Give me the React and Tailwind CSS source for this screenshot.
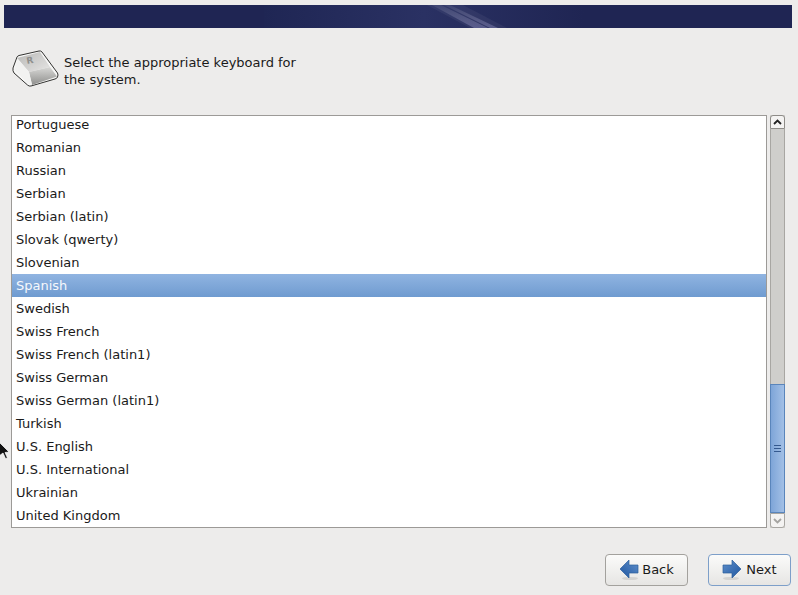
const languages = [
  "Portuguese",
  "Romanian",
  "Russian",
  "Serbian",
  "Serbian (latin)",
  "Slovak (qwerty)",
  "Slovenian",
  "Spanish",
  "Swedish",
  "Swiss French",
  "Swiss French (latin1)",
  "Swiss German",
  "Swiss German (latin1)",
  "Turkish",
  "U.S. English",
  "U.S. International",
  "Ukrainian",
  "United Kingdom",
];

const KeyIcon = () => (
  <svg width="48" height="38" viewBox="0 0 48 38" className="shrink-0">
    <defs>
      <linearGradient id="keyFront" x1="0" y1="0" x2="0" y2="1">
        <stop offset="0" stopColor="#d8d8d6" />
        <stop offset="1" stopColor="#8f8f8d" />
      </linearGradient>
      <linearGradient id="keyTop" x1="0" y1="0" x2="1" y2="1">
        <stop offset="0" stopColor="#b9b9b7" />
        <stop offset="1" stopColor="#e6e5e4" />
      </linearGradient>
    </defs>
    <path d="M1 19 L5 8 Q5.5 7 7 6.5 L27 2 Q29 1.6 30 3 L45.5 24 Q46.5 26 45.5 28 Q45 29.5 43 30 L19 37 Q17 37.5 15.5 36 L2 24 Q0.5 22 1 19 Z" fill="#f7f7f6" stroke="#333331" strokeWidth="1" />
    <path d="M5 9 L28 3 L38 18 L17 23 Z" fill="url(#keyTop)" />
    <path d="M17 23 L38 18 L45 27.5 L20 36 Z" fill="url(#keyFront)" />
    <path d="M2.5 21 L5.5 9.5 L17 23 L20 35.5 L16 34.5 Z" fill="#f2f2f1" />
    <text x="15" y="15" fontSize="9" fontWeight="700" fill="#8f8f8d" fontFamily="DejaVu Sans, sans-serif" transform="rotate(-10 15 15)">R</text>
  </svg>
);

const ArrowIcon = ({ flip }) => (
  <svg width="20" height="22" viewBox="0 0 20 22" className={flip ? "shrink-0 -scale-x-100" : "shrink-0"}>
    <defs>
      <linearGradient id={flip ? "arrowBack" : "arrowNext"} x1="0" y1="0" x2="1" y2="1">
        <stop offset="0" stopColor="#5f8fcb" />
        <stop offset="1" stopColor="#1f569f" />
      </linearGradient>
    </defs>
    <ellipse cx="9" cy="19.5" rx="8" ry="1.6" fill="#d4d3d1" />
    <path
      d="M1 6 H10 V1 L19 10 L10 19 V14 H1 Z"
      fill={flip ? "url(#arrowBack)" : "url(#arrowNext)"}
      stroke="#2d5f9c"
      strokeWidth="0.7"
      strokeLinejoin="round"
    />
  </svg>
);

const Cursor = () => (
  <svg width="10" height="17" viewBox="0 0 10 17" className="absolute left-0 top-[442px]">
    <path d="M-1 0 L9 10 L5 10.5 L7.5 16 L5.5 16.5 L3 11 L-1 14 Z" fill="#111111" stroke="#ffffff" strokeWidth="0.7" />
  </svg>
);

export default function App() {
  return (
    <div className="relative flex h-[595px] w-[798px] flex-col overflow-hidden bg-[#edeceb] font-['DejaVu_Sans',sans-serif] text-[13px] text-[#1a1a1a]">
      <div className="relative mx-1 mt-[5px] h-[23px] w-[788px] shrink-0 overflow-hidden bg-[#1f2553]">
        <svg width="788" height="23" viewBox="0 0 788 23" className="absolute left-0 top-0">
          <defs>
            <linearGradient id="headerFade" x1="0" y1="0" x2="1" y2="0">
              <stop offset="0" stopColor="#1f2654" />
              <stop offset="0.5" stopColor="#2a3163" />
              <stop offset="1" stopColor="#1f2553" />
            </linearGradient>
            <linearGradient id="streakFade" x1="0" y1="0" x2="0" y2="1">
              <stop offset="0" stopColor="#ffffff" stopOpacity="0.06" />
              <stop offset="1" stopColor="#b8b4e8" stopOpacity="0.3" />
            </linearGradient>
          </defs>
          <rect x="260" width="320" height="23" fill="url(#headerFade)" />
          <polygon points="423,0 459,0 503,23 466,23" fill="#ffffff" fillOpacity="0.05" />
          <polygon points="428,0 437,0 484,23 470,23" fill="url(#streakFade)" />
          <polygon points="440,0 446,0 494,23 486,23" fill="url(#streakFade)" />
        </svg>
      </div>

      <div className="mt-[21px] flex h-[50px] shrink-0 items-start pl-3">
        <KeyIcon />
        <p className="ml-1 mt-[5px] w-[240px] leading-[17px]">
          Select the appropriate keyboard for the system.
        </p>
      </div>

      <div className="mt-[16px] flex h-[413px] shrink-0 pl-[11px]">
        <div className="h-full w-[756px] overflow-hidden border border-[#9c9a97] bg-white">
          <div className="-mt-[3px]">
            {languages.map((name) => (
              <div
                key={name}
                className={
                  name === "Spanish"
                    ? "flex h-[23px] items-center bg-gradient-to-b from-[#90b4e1] to-[#6f9bd0] pl-1 text-[#f6f8fc]"
                    : "flex h-[23px] items-center pl-1"
                }
              >
                {name}
              </div>
            ))}
          </div>
        </div>

        <div className="ml-[3px] flex h-full w-[15px] flex-col bg-[#cfcecb]">
          <div className="flex h-[14px] shrink-0 items-center justify-center rounded-t-[3px] border border-[#8e8c88] bg-[#f4f3f2]">
            <svg width="9" height="6" viewBox="0 0 9 6">
              <path d="M1 5 L4.5 1.5 L8 5" fill="none" stroke="#222222" strokeWidth="1.8" />
            </svg>
          </div>
          <div className="flex-1 border-x border-[#a8a6a2]" />
          <div className="flex h-[129px] shrink-0 flex-col items-center justify-center gap-[2px] border border-[#5a85bb] bg-gradient-to-r from-[#7ea5d8] to-[#a3c0e6]">
            <span className="h-px w-[7px] bg-[#34598f]" />
            <span className="h-px w-[7px] bg-[#34598f]" />
            <span className="h-px w-[7px] bg-[#34598f]" />
          </div>
          <div className="flex h-[15px] shrink-0 items-center justify-center rounded-b-[3px] border border-[#a8a6a2] bg-[#f4f3f2]">
            <svg width="9" height="6" viewBox="0 0 9 6">
              <path d="M1 1 L4.5 4.5 L8 1" fill="none" stroke="#a5a4a1" strokeWidth="1.8" />
            </svg>
          </div>
        </div>
      </div>

      <div className="mt-[26px] flex justify-end gap-5 pr-[7px]">
        <button className="flex h-[32px] w-[83px] items-center justify-center gap-[3px] rounded-[4px] border border-[#a3a19d] bg-gradient-to-b from-[#fbfbfa] to-[#e6e5e3]">
          <ArrowIcon flip />
          Back
        </button>
        <button className="flex h-[32px] w-[83px] items-center justify-center gap-[4px] rounded-[4px] border border-[#7d9fc9] bg-gradient-to-b from-[#fbfbfa] to-[#e6e5e3]">
          <ArrowIcon />
          Next
        </button>
      </div>

      <Cursor />
    </div>
  );
}
